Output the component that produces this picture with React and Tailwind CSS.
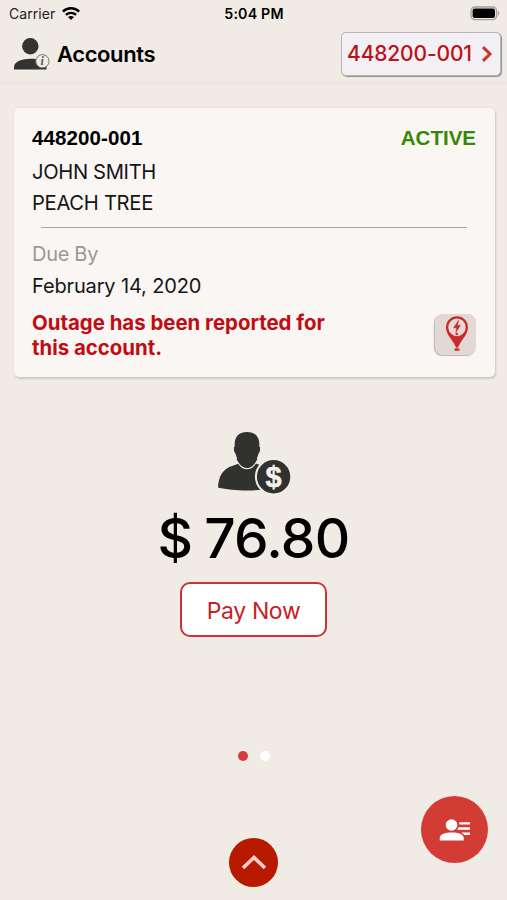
import React from "react";

function WifiIcon() {
  return (
    <svg className="ml-[7px] h-[14px] w-[18px]" viewBox="0 0 18 14" fill="none" stroke="#000">
      <path d="M0.9 4.700C5.4 .2 12.6 .2 17.1 4.700" strokeWidth="2.5" />
      <path d="M3.9 7.900C6.8 5.100 11.2 5.100 14.1 7.900" strokeWidth="2.3" />
      <path d="M9 13.100 6 10.100C7.7 8.500 10.3 8.500 12 10.100Z" fill="#000" stroke="none" />
    </svg>
  );
}

function BatteryIcon() {
  return (
    <svg className="h-[16px] w-[32px]" viewBox="0 0 32 16">
      <rect x="2" y="1" width="25.600" height="12.600" rx="3.800" fill="none" stroke="#a19e99" strokeWidth="1.300" />
      <rect x="3.600" y="2.600" width="22.400" height="9.400" rx="2" fill="#000" />
      <path d="M29 5c1.500.6 1.500 4 0 4.600z" fill="#a19e99" />
    </svg>
  );
}

function AccountInfoIcon() {
  return (
    <svg className="h-[34px] w-[38px]" viewBox="0 0 38 34">
      <circle cx="17.3" cy="8.300" r="8.200" fill="#333331" />
      <path d="M1 31.500v-2.500c0-5.500 8-8.300 16.500-8.300S33.500 23 33.500 28v3.500z" fill="#333331" />
      <circle cx="29.400" cy="23.200" r="6.600" fill="#f1ece6" stroke="#777572" strokeWidth="1" />
      <text x="29.200" y="27.300" textAnchor="middle" className="font-['Liberation_Serif',serif] text-[12px] font-bold italic" fill="#555">i</text>
    </svg>
  );
}

function OutageIcon() {
  return (
    <svg className="h-[36px] w-[24px]" viewBox="0 0 24 36">
      <path d="M12 .3C5.600.3 1 5.300 1 11.200c0 6 4.400 10.800 7.400 15.300L11 31.200h2l2.600-4.700c3-4.500 7.400-9.300 7.400-15.300C23 5.300 18.400.3 12 .3Z" fill="#c92a2b" />
      <ellipse cx="12" cy="11.300" rx="8.700" ry="8.900" fill="#e5dad6" />
      <path d="M13.600 4.300 8.600 11.800l3 .1L10.800 16.600l4.700-7.300-3 .2Z" fill="#c92a2b" stroke="#c92a2b" strokeWidth=".5" />
      <circle cx="11.800" cy="18" r="1.300" fill="#c92a2b" />
      <path d="M12 30v4" stroke="#c92a2b" strokeWidth="1" />
      <rect x="9.300" y="32.500" width="5.400" height="2.300" rx="1.100" fill="#c92a2b" />
    </svg>
  );
}

function AccountBalanceIcon() {
  return (
    <svg className="h-[64px] w-[76px]" viewBox="0 0 76 64">
      <path d="M2 56.500C2.500 45 7 37.500 17.500 34.500L23 32.500h17L45 34.500c9 2.500 12 8 12 22.500-15 3.500-40 3.200-55-.5Z" fill="#31312f" />
      <path d="M31 .2C40 .2 44.800 5.800 44 15.200c1.400.8 1 5.500-.6 7.300C41.500 30.500 37 37.600 31 37.600S20.500 30.500 18.600 22.500c-1.600-1.800-2-6.500-.6-7.300C17.200 5.800 22 .2 31 .2Z" fill="#31312f" stroke="#f0ebe5" strokeWidth="1.500" />
      <path d="M20.500 28C23 33 26.500 37 31 37S39 33 41.500 28Z" fill="#31312f" />
      <circle cx="57.600" cy="45.800" r="17.700" fill="#31312f" stroke="#f1ece6" strokeWidth="2" />
      <text x="57.600" y="55.800" textAnchor="middle" className="font-['Liberation_Sans',sans-serif] text-[29px] font-bold" fill="#f5f1ed" stroke="#f5f1ed" strokeWidth=".5">$</text>
    </svg>
  );
}

function StatusBar() {
  return (
    <div className="grid h-[27px] grid-cols-3 items-center pr-[6px] pl-[9px] text-black">
      <div className="flex items-center text-[14px] tracking-[0.05px] text-[#222]">
        Carrier
        <WifiIcon />
      </div>
      <div className="pt-px pr-[2px] text-center text-[14.2px] font-semibold tracking-[0.2px]">5:04 PM</div>
      <div className="flex justify-end">
        <BatteryIcon />
      </div>
    </div>
  );
}

function Header() {
  return (
    <header className="flex h-[55px] items-center pr-[6px] pl-[13px] shadow-[0_1px_3px_rgba(130,120,130,0.1)]">
      <AccountInfoIcon />
      <h1 className="ml-[6px] flex-1 pb-px text-[22px] font-semibold tracking-[-0.4px]">Accounts</h1>
      <button className="-mt-[2px] flex h-[44px] w-[160px] items-center justify-between rounded-[5px] border border-[#b4b3b6] bg-[#f2f0f4] pr-[7px] pl-[6px] text-[21px] font-medium text-[#bd1118] shadow-[1px_1px_1px_#929094]">
        <span className="-ml-px pt-px tracking-[-0.15px] whitespace-nowrap">448200-001</span>
        <svg className="h-[18px] w-[12px]" viewBox="0 0 12 18" fill="none" stroke="#d13328" strokeWidth="3">
          <path d="m2 2.200 7 6.800-7 6.800" />
        </svg>
      </button>
    </header>
  );
}

function AccountCard() {
  return (
    <section className="mx-[14px] mt-[26px] h-[269px] w-[481px] rounded-[5px] bg-[#faf6f3] pt-[14px] pr-[19px] pl-[18px] shadow-[1px_2px_2px_#ccc8c5,0_0_2px_#ddd9d5]">
      <div className="flex h-[32px] items-center justify-between font-['Liberation_Sans',sans-serif] text-[20.5px] font-bold">
        <span className="tracking-[0.1px]">448200-001</span>
        <span className="text-[#378708]">ACTIVE</span>
      </div>
      <div className="mt-[2px] h-[31px] text-[20.2px] leading-[31px] tracking-[-0.35px] text-[#151515]">JOHN SMITH</div>
      <div className="h-[31px] text-[20.2px] leading-[31px] tracking-[-0.3px] text-[#151515]">PEACH TREE</div>
      <div className="mx-[9px] mt-[9px] h-px bg-[#aaa6a4]" />
      <div className="mt-[10px] h-[32px] text-[20px] leading-[32px] tracking-[-0.3px] text-[#9b9896]">Due By</div>
      <div className="h-[32px] text-[20px] leading-[32px] tracking-[-0.14px] text-[#151515]">February 14, 2020</div>
      <div className="flex items-center justify-between">
        <p className="mt-[9px] w-[310px] text-[20.4px] leading-[24.5px] font-bold text-[#c00d14]">
          Outage has been reported for
          <br />
          this account.
        </p>
        <div className="mt-[6px] flex h-[41px] w-[41px] items-center justify-center rounded-[8px] bg-[#e2d9d5] pl-[2px] shadow-[-1px_1px_1px_#bcb6b3]">
          <OutageIcon />
        </div>
      </div>
    </section>
  );
}

export default function App() {
  return (
    <main className="relative flex h-[900px] w-[507px] flex-col overflow-hidden bg-[#f0ebe5] font-['Inter',sans-serif] text-black">
      <StatusBar />
      <Header />
      <AccountCard />
      <section className="mt-[54px] flex flex-col items-center">
        <AccountBalanceIcon />
        <div className="mt-[12px] h-[62px] text-[55px] leading-[62px] font-medium tracking-[-0.7px] whitespace-nowrap [word-spacing:-2px]">$ 76.80</div>
        <button className="mt-[13px] h-[55px] w-[147px] rounded-[10px] border-2 border-[#cb3437] bg-white pt-[3px] text-[23px] tracking-[-0.35px] text-[#c52226]">Pay Now</button>
      </section>
      <div className="mt-[114px] flex justify-center gap-[12px]">
        <span className="h-[10px] w-[10px] rounded-full bg-[#d53c3a]" />
        <span className="h-[10px] w-[10px] rounded-full bg-white" />
      </div>
      <button className="mx-auto mt-[77px] flex h-[49px] w-[49px] items-center justify-center rounded-full bg-[#b81a00]">
        <svg className="-mt-[2px] h-[18px] w-[26px]" viewBox="0 0 26 18" fill="none" stroke="#ffcfc9" strokeWidth="3.600">
          <path d="M2 15 13 4.500 24 15" />
        </svg>
      </button>
      <button className="absolute top-[796px] left-[421px] flex h-[67px] w-[67px] items-center justify-center rounded-full bg-[#d33c34]">
        <svg className="h-[22px] w-[32px]" viewBox="0 0 32 22" fill="#fff">
          <circle cx="12.500" cy="6" r="5.800" />
          <path d="M.7 21.500v-2.500c0-3.800 5.500-5.500 12-5.500s12 1.700 12 5.500V21.500z" />
          <path d="M20.200 3.300H31v2.300H20.500zM19.500 8.300H31v2.400H18.200zM22.500 13.500H31v2.500H25.500z" />
        </svg>
      </button>
    </main>
  );
}
